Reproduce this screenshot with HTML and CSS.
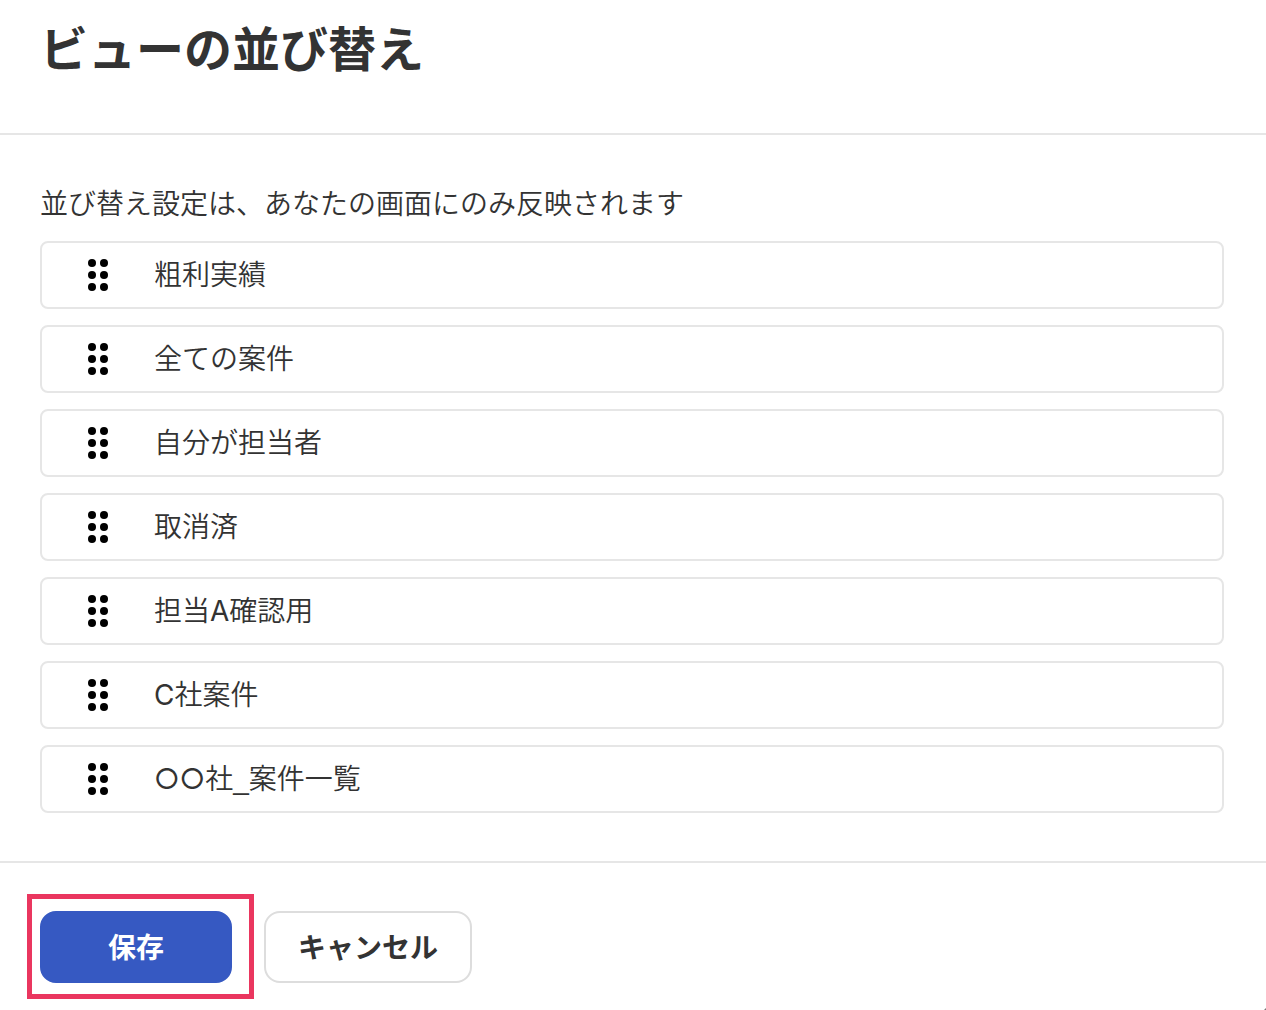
FILE: index.html
```html
<!DOCTYPE html>
<html lang="ja">
<head>
<meta charset="utf-8">
<meta name="viewport" content="width=device-width, initial-scale=1">
<title>ビューの並び替え</title>
<link rel="stylesheet" href="styles.css">
</head>
<body>
<svg class="sprite" aria-hidden="true">
  <symbol id="grip" viewBox="0 0 20 32">
    <circle cx="4" cy="4" r="4"/><circle cx="16" cy="4" r="4"/>
    <circle cx="4" cy="16" r="4"/><circle cx="16" cy="16" r="4"/>
    <circle cx="4" cy="28" r="4"/><circle cx="16" cy="28" r="4"/>
  </symbol>
</svg>
<main class="dialog">
  <header class="dialog-header">
    <h1 class="title">ビューの並び替え</h1>
  </header>
  <section class="dialog-body">
    <p class="note">並び替え設定は、あなたの画面にのみ反映されます</p>
    <ul class="views">
      <li class="view"><svg class="grip" aria-hidden="true"><use href="#grip"/></svg><span>粗利実績</span></li>
      <li class="view"><svg class="grip" aria-hidden="true"><use href="#grip"/></svg><span>全ての案件</span></li>
      <li class="view"><svg class="grip" aria-hidden="true"><use href="#grip"/></svg><span>自分が担当者</span></li>
      <li class="view"><svg class="grip" aria-hidden="true"><use href="#grip"/></svg><span>取消済</span></li>
      <li class="view"><svg class="grip" aria-hidden="true"><use href="#grip"/></svg><span>担当<span class="latin">A</span>確認用</span></li>
      <li class="view"><svg class="grip" aria-hidden="true"><use href="#grip"/></svg><span><span class="latin">C</span>社案件</span></li>
      <li class="view"><svg class="grip" aria-hidden="true"><use href="#grip"/></svg><span><span class="latin">○○</span>社<span class="mark">_</span>案件一覧</span></li>
    </ul>
  </section>
  <footer class="dialog-footer">
    <div class="highlight">
      <button type="button" class="button button-primary">保存</button>
    </div>
    <button type="button" class="button">キャンセル</button>
    <svg class="corner" viewBox="0 0 2 2" aria-hidden="true"><path d="M2 0V2H0Z"/></svg>
  </footer>
</main>
</body>
</html>
```

FILE: styles.css
```css
* {
  box-sizing: border-box;
}

body {
  margin: 0;
  background: #fff;
  color: #333;
  font-family: Inter, "Noto Sans CJK JP", sans-serif;
  font-size: 28px;
  line-height: 36px;
}

.sprite {
  position: absolute;
  width: 0;
  height: 0;
}

.dialog-header {
  padding: 18px 40px 51px;
  border-bottom: 2px solid #e6e6e6;
}

.title {
  margin: 0;
  font-size: 48px;
  font-weight: 700;
  line-height: 64px;
}

.dialog-body {
  padding: 51px 42px 48px 40px;
}

.note {
  margin: 0 0 19px;
  font-weight: 350;
}

.views {
  display: grid;
  gap: 16px;
  margin: 0;
  padding: 0;
  list-style: none;
}

.view {
  display: flex;
  align-items: center;
  gap: 46px;
  min-height: 68px;
  padding: 0 46px;
  border: 2px solid #e6e6e6;
  border-radius: 8px;
  font-weight: 350;
}

.latin {
  font-weight: 400;
}

.mark {
  font-family: "Liberation Sans", sans-serif;
  font-weight: 400;
}

.grip {
  width: 20px;
  height: 32px;
  fill: #000;
}

.dialog-footer {
  position: relative;
  display: flex;
  gap: 32px;
  padding: 48px 40px 27px;
  border-top: 2px solid #e6e6e6;
}

.button {
  display: block;
  min-height: 72px;
  padding: 2px 32px 0;
  border: 2px solid #ddd;
  border-radius: 16px;
  background: #fff;
  color: #333;
  font: inherit;
  font-weight: 700;
}

.button-primary {
  min-width: 192px;
  border-color: #3659c2;
  background: #3659c2;
  color: #fff;
}

/* Rectangular marker drawn around the save button */
.highlight {
  position: relative;
}

.highlight::after {
  content: "";
  position: absolute;
  inset: -17px -22px -16px -13px;
  border: 5px solid #ea365f;
  pointer-events: none;
}

.corner {
  position: absolute;
  right: 0;
  bottom: 0;
  width: 2px;
  height: 2px;
  fill: #777;
}
```
